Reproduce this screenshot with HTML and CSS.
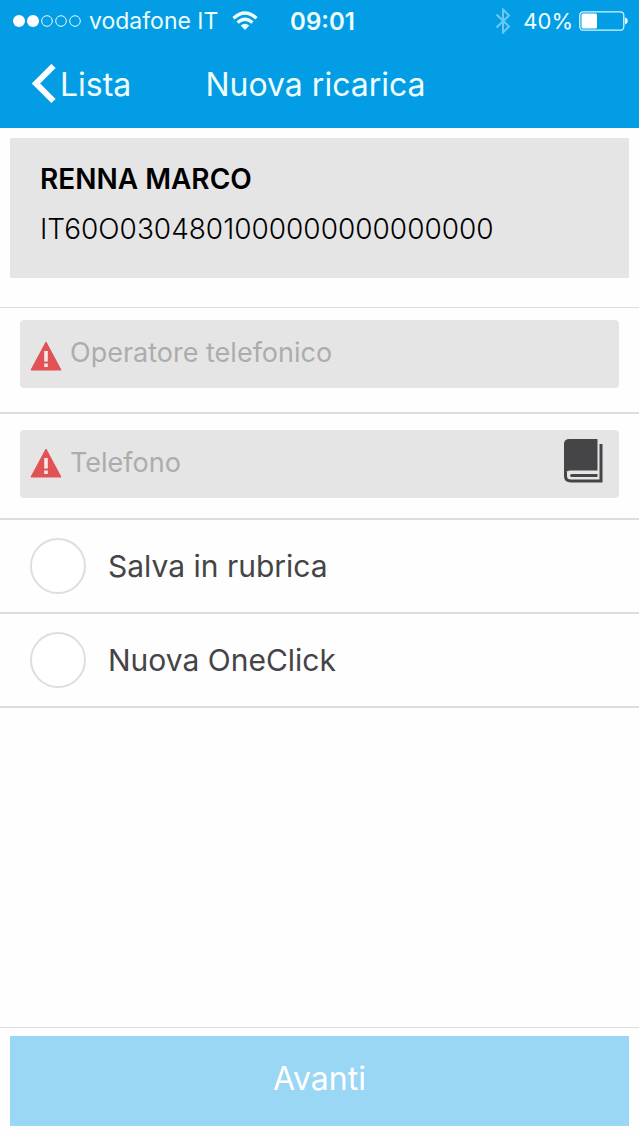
FILE: index.html
```html
<!DOCTYPE html>
<html lang="it">
<head>
<meta charset="utf-8">
<meta name="viewport" content="width=device-width, initial-scale=1">
<title>Nuova ricarica</title>
<link rel="stylesheet" href="styles.css">
</head>
<body class="screen">
<header class="topbar">
  <div class="status">
    <div class="status-left">
      <svg class="signal" viewBox="0 0 68 12" aria-hidden="true">
        <g fill="#fff"><circle cx="6" cy="6" r="6"/><circle cx="20" cy="6" r="6"/></g>
        <g fill="none" stroke="#e8fbff" stroke-width="1"><circle cx="34" cy="6" r="5.3"/><circle cx="48" cy="6" r="5.3"/><circle cx="62" cy="6" r="5.3"/></g>
      </svg>
      <span>vodafone IT</span>
      <svg class="wifi" viewBox="0 0 26 20" aria-hidden="true">
        <g fill="none" stroke="#effdff" stroke-width="3.300"><path d="M1.500 7.200Q13-3.200 24.500 7.200"/><path d="M5.600 11.600Q13 4.900 20.400 11.600"/></g>
        <path fill="#effdff" d="M8.700 14.500Q13 10.800 17.300 14.500L13 19z"/>
      </svg>
    </div>
    <span class="clock">09:01</span>
    <div class="status-right">
      <svg class="bluetooth" viewBox="0 0 16 26" aria-hidden="true"><path d="M1.500 6.500L14 18.500 8 24.500V1.500L14 7.500 1.500 19.500" fill="none" stroke="#6cc8f2" stroke-width="2"/></svg>
      <span class="percent">40%</span>
      <svg class="battery" viewBox="0 0 49 20" aria-hidden="true">
        <rect x=".8" y=".8" width="44" height="18.400" rx="3.500" fill="none" stroke="#d5f5ff" stroke-width="1.300"/>
        <rect x="2.500" y="2.500" width="15.500" height="15" rx="1.500" fill="#fff"/>
        <path d="M46 6.500q2.800.8 2.800 3.500T46 13.500z" fill="#e8fbff"/>
      </svg>
    </div>
  </div>
  <nav class="navbar">
    <a class="back" href="#">
      <svg class="chevron" viewBox="0 0 24 40" aria-hidden="true"><path d="M21.500 2L4 19.500l17.500 17.500" fill="none" stroke="#fff" stroke-width="6"/></svg>
      <span>Lista</span>
    </a>
    <h1 class="title">Nuova ricarica</h1>
  </nav>
</header>
<main class="content">
  <section class="account">
    <h2 class="holder">RENNA MARCO</h2>
    <p class="iban">IT60O0304801000000000000000</p>
  </section>
  <form class="form" id="topup">
    <div class="row row-operator">
      <div class="field">
        <svg class="warning" viewBox="0 0 32 30" aria-hidden="true"><path d="M16 1L31 29H1z" fill="#e15255" stroke="#e15255" stroke-linejoin="round"/><path d="M14.200 10h3.600v10.500h-3.600zM14.200 22.500h3.600V26h-3.600z" fill="#fbe9e9"/></svg>
        <input class="entry" type="text" name="operator" placeholder="Operatore telefonico" aria-label="Operatore telefonico">
      </div>
    </div>
    <div class="row row-phone">
      <div class="field">
        <svg class="warning" viewBox="0 0 32 30" aria-hidden="true"><path d="M16 1L31 29H1z" fill="#e15255" stroke="#e15255" stroke-linejoin="round"/><path d="M14.200 10h3.600v10.500h-3.600zM14.200 22.500h3.600V26h-3.600z" fill="#fbe9e9"/></svg>
        <input class="entry" type="tel" name="phone" placeholder="Telefono" aria-label="Telefono">
        <button class="contacts" type="button" aria-label="Rubrica">
          <svg class="book" viewBox="0 0 40 46" aria-hidden="true">
            <path d="M6 1H34V32.500H7Q3 32.500 .5 36V6Q.5 1 6 1z" fill="#454446"/>
            <path d="M37.500 6V43H7.500Q2 43 2 38V34" fill="none" stroke="#454446" stroke-width="3"/>
            <path d="M8.500 36H34v3H8.500Q6.500 39 6.500 37.500T8.500 36z" fill="#454446"/>
          </svg>
        </button>
      </div>
    </div>
    <label class="row option"><input class="check" type="checkbox" name="save"><span>Salva in rubrica</span></label>
    <label class="row option"><input class="check" type="checkbox" name="oneclick"><span>Nuova OneClick</span></label>
  </form>
</main>
<footer class="footer">
  <button class="next" type="submit" form="topup">Avanti</button>
</footer>
</body>
</html>
```
FILE: styles.css
```css
* { box-sizing: border-box; }

.screen {
  display: flex;
  flex-direction: column;
  min-height: 100vh;
  margin: 0;
  background: #fefefe;
  color: #454446;
  font-family: Inter, "Liberation Sans", sans-serif;
}

.topbar {
  padding-bottom: 8px;
  background: #029de4;
  color: #effdff;
}

.status {
  display: grid;
  grid-template-columns: 1fr auto 1fr;
  align-items: center;
  height: 42px;
  padding: 0 11px 0 13px;
  font-size: 23px;
}

.status-left,
.status-right {
  display: flex;
  align-items: center;
}

.status-left { gap: 8px; }
.status-right { justify-content: flex-end; gap: 6px; }
.clock { padding-left: 4px; font-size: 24px; font-weight: 600; }
.percent { font-size: 22px; }
.signal { width: 68px; height: 12px; }
.wifi { width: 26px; height: 20px; margin-left: 6px; }
.bluetooth { width: 16px; height: 26px; margin-right: 6px; }
.battery { width: 49px; height: 20px; }

.navbar {
  display: grid;
  grid-template-columns: 1fr auto 1fr;
  align-items: center;
  height: 76px;
  margin-bottom: 2px;
  padding: 8px 40px 0 32px;
  font-size: 32px;
}

.back {
  display: flex;
  align-items: center;
  gap: 4px;
  color: inherit;
  text-decoration: none;
}

.chevron { width: 24px; height: 40px; }
.title { margin: 0; font-size: 32px; font-weight: 400; }

.content { flex: 1; }

.account {
  margin: 10px 10px 29px;
  padding: 20px 30px 28px;
  background: #e6e5e6;
  color: #000;
}

.holder {
  margin: 0 0 8px;
  font-size: 28px;
  font-weight: 600;
  line-height: 42px;
}

.iban {
  margin: 0;
  font-size: 28px;
  font-weight: 300;
  line-height: 42px;
}

.form { border-top: 1px solid #dededf; }
.row { border-bottom: 2px solid #dededf; }
.row-operator { padding: 12px 20px 24px; }
.row-phone { padding: 16px 20px 20px; }

.field {
  display: flex;
  align-items: center;
  gap: 8px;
  height: 68px;
  padding: 0 15px 3px 10px;
  border-radius: 4px;
  background: #e6e5e6;
}

.warning { flex: none; width: 32px; height: 30px; }
.row-operator .warning { margin-top: 6px; }

.entry {
  flex: 1;
  min-width: 0;
  padding: 0;
  border: 0;
  outline: 0;
  background: none;
  color: #454446;
  font: 400 27px Inter, "Liberation Sans", sans-serif;
}

.entry::placeholder { color: #adacad; opacity: 1; }

.contacts {
  display: flex;
  padding: 0 0 3px;
  border: 0;
  background: none;
}

.book { width: 41px; height: 46px; }

.option {
  display: flex;
  align-items: center;
  gap: 22px;
  padding: 18px 30px;
  font-size: 30px;
}

.check {
  flex: none;
  width: 56px;
  height: 56px;
  margin: 0;
  border: 2px solid #dededf;
  border-radius: 50%;
  background: #fff;
  appearance: none;
}

.check:checked { background: #029de4; }

.footer {
  padding: 8px 10px 10px;
  border-top: 1px solid #dededf;
}

.next {
  display: block;
  width: 100%;
  height: 90px;
  padding: 0 0 6px;
  border: 0;
  background: #99d7f4;
  color: #fff;
  font: 400 32px Inter, "Liberation Sans", sans-serif;
}
```
